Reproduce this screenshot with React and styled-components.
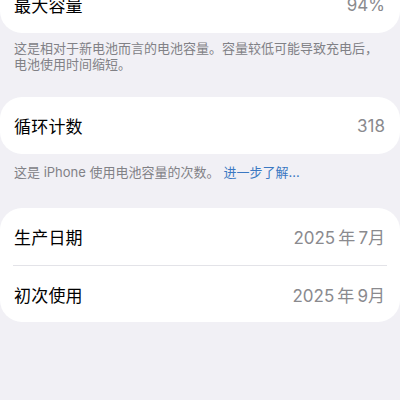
import React from "react";
import styled, { createGlobalStyle } from "styled-components";

const Global = createGlobalStyle`
  html, body {
    margin: 0;
    padding: 0;
    background: #f1f0f5;
    overflow: hidden;
  }
  body {
    font-family: "Inter", "Noto Sans CJK SC", "Noto Sans", sans-serif;
    -webkit-font-smoothing: antialiased;
  }
`;

const Page = styled.div`
  width: 400px;
  height: 400px;
  background: #f1f0f5;
  display: flex;
  flex-direction: column;
  overflow: hidden;
`;

const Section = styled.section`
  display: flex;
  flex-direction: column;
  margin-top: ${(p) => p.$top}px;
`;

const Card = styled.div`
  background: #ffffff;
  border-radius: 22px;
  display: flex;
  flex-direction: column;
`;

const Row = styled.div`
  height: 57px;
  display: flex;
  align-items: center;
  justify-content: space-between;
  padding: 0 15px 0 14px;
  & + & {
    border-top: 1px solid #e3e3e8;
    margin: 0 13px;
    padding: 0 2px 0 1px;
    height: 56px;
  }
`;

const Label = styled.span`
  font-size: 17px;
  color: #000000;
  letter-spacing: 0.2px;
`;

const Value = styled.span`
  font-size: 17px;
  color: #8a8a8e;
`;

const Footer = styled.p`
  margin: 0;
  padding: ${(p) => p.$top}px 16px 0 14px;
  font-size: 13px;
  line-height: 16px;
  color: #818186;
`;

const Link = styled.a`
  color: #3b78c2;
  text-decoration: none;
  margin-left: 4px;
`;

export default function App() {
  return (
    <Page>
      <Global />
      <Section $top={-24}>
        <Card>
          <Row>
            <Label>最大容量</Label>
            <Value>94%</Value>
          </Row>
        </Card>
        <Footer $top={7}>
          这是相对于新电池而言的电池容量。容量较低可能导致充电后，
          <br />
          电池使用时间缩短。
        </Footer>
      </Section>
      <Section $top={25}>
        <Card>
          <Row>
            <Label>循环计数</Label>
            <Value>318</Value>
          </Row>
        </Card>
        <Footer $top={10}>
          这是 iPhone 使用电池容量的次数。
          <Link href="#">进一步了解...</Link>
        </Footer>
      </Section>
      <Section $top={28}>
        <Card>
          <Row>
            <Label>生产日期</Label>
            <Value>2025{"\u2009"}年{"\u2009"}7月</Value>
          </Row>
          <Row>
            <Label>初次使用</Label>
            <Value>2025{"\u2009"}年{"\u2009"}9月</Value>
          </Row>
        </Card>
      </Section>
    </Page>
  );
}
